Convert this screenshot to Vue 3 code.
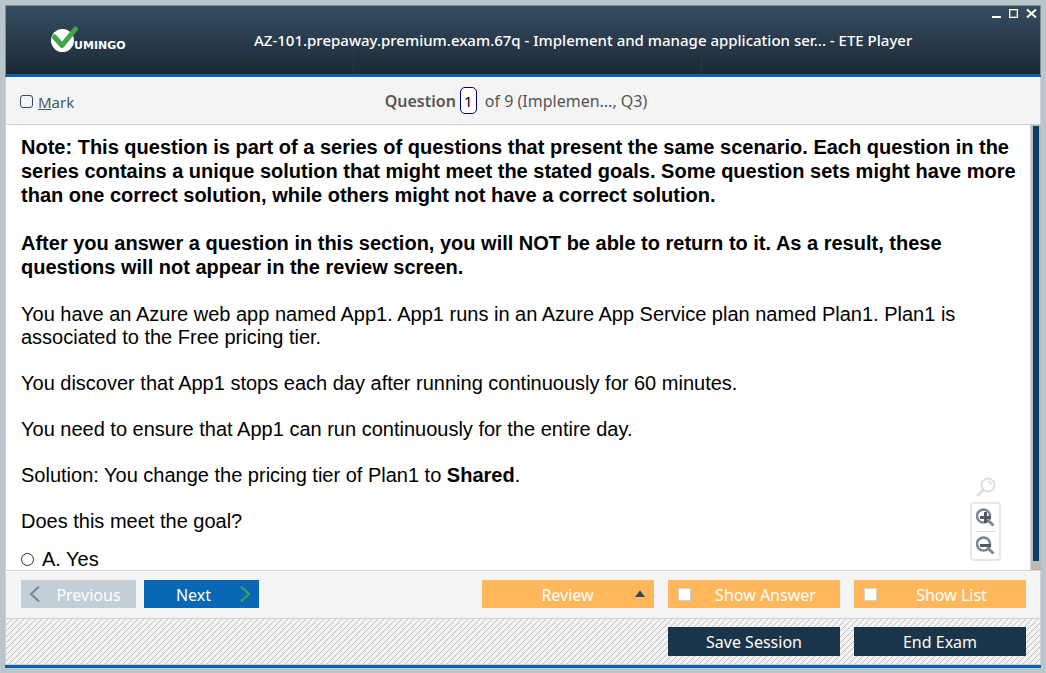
<script setup>
import { ref } from 'vue'

const marked = ref(false)
const questionNumber = ref('1')
const answer = ref('')
const showAnswer = ref(false)
const showList = ref(false)
</script>

<template>
  <div class="desktop">
    <main class="window">
      <header class="titlebar">
        <svg class="logo" viewBox="0 0 84 30" role="img" aria-label="Vumingo">
          <circle cx="12.500" cy="15.500" r="11.500" fill="#fff" />
          <path d="M4.500 12 L12 20.500 L25.500 4" fill="none" stroke="#43a447" stroke-width="5" stroke-linecap="round" stroke-linejoin="round" />
          <text class="logo-text" x="24" y="24">UMINGO</text>
        </svg>
        <h1 class="title">AZ-101.prepaway.premium.exam.67q - Implement and manage application ser... - ETE Player</h1>
        <div class="window-controls">
          <button type="button" aria-label="Minimize">
            <svg width="9" height="11" viewBox="0 0 9 11"><path d="M0 9h9" stroke="#fff" stroke-width="2" /></svg>
          </button>
          <button type="button" aria-label="Maximize">
            <svg width="9" height="11" viewBox="0 0 9 11"><rect x=".5" y="1.500" width="8" height="8" fill="none" stroke="#fff" /><rect x="1.500" y="2.500" width="6" height="6" fill="none" stroke="#8d8580" /></svg>
          </button>
          <button type="button" aria-label="Close">
            <svg width="11" height="11" viewBox="0 0 11 11"><path d="M1 1.500l9 8M10 1.500l-9 8" stroke="#fff" stroke-width="2" /></svg>
          </button>
        </div>
      </header>

      <section class="question-bar">
        <label class="mark"><input v-model="marked" type="checkbox" /><span><u>M</u>ark</span></label>
        <div class="position">
          <label for="question-number">Question</label>
          <input id="question-number" v-model="questionNumber" type="text" />
          <span>of 9 (Implemen..., Q3)</span>
        </div>
      </section>

      <section class="content">
        <article class="question">
          <p class="note">Note: This question is part of a series of questions that present the same scenario. Each question in the<br />series contains a unique solution that might meet the stated goals. Some question sets might have more<br />than one correct solution, while others might not have a correct solution.</p>
          <p class="note">After you answer a question in this section, you will NOT be able to return to it. As a result, these<br />questions will not appear in the review screen.</p>
          <p>You have an Azure web app named App1. App1 runs in an Azure App Service plan named Plan1. Plan1 is<br />associated to the Free pricing tier.</p>
          <p>You discover that App1 stops each day after running continuously for 60 minutes.</p>
          <p>You need to ensure that App1 can run continuously for the entire day.</p>
          <p>Solution: You change the pricing tier of Plan1 to <b>Shared</b>.</p>
          <p>Does this meet the goal?</p>
          <label class="choice"><input v-model="answer" type="radio" name="answer" value="A" /><span>A. Yes</span></label>
        </article>
        <div class="scrollbar"><div class="thumb"></div></div>
        <div class="zoom">
          <svg width="20" height="20" viewBox="0 0 20 20" fill="none" stroke="#dedede" aria-hidden="true">
            <circle cx="12" cy="8" r="6.500" stroke-width="2" />
            <path d="M12 4.500a4 4 0 0 1 3.500 3" stroke-width="1.500" />
            <path d="M7 13L2 18" stroke-width="3" stroke-linecap="round" />
          </svg>
          <div class="zoom-box">
            <button type="button" aria-label="Zoom in">
              <svg width="20" height="20" viewBox="0 0 20 20" fill="none">
                <circle cx="7.500" cy="8" r="6.500" stroke="#788792" stroke-width="2.500" />
                <path d="M12 12.500l5.500 5" stroke="#788792" stroke-width="3" />
                <path d="M4 9.500h11M9.500 4v11" stroke="#54585c" stroke-width="3" />
              </svg>
            </button>
            <button type="button" aria-label="Zoom out">
              <svg width="20" height="20" viewBox="0 0 20 20" fill="none">
                <circle cx="7.500" cy="8" r="6.500" stroke="#788792" stroke-width="2.500" />
                <path d="M12 12.500l5.500 5" stroke="#788792" stroke-width="3" />
                <path d="M4 9.500h11" stroke="#54585c" stroke-width="3" />
              </svg>
            </button>
          </div>
        </div>
      </section>

      <nav class="nav-bar">
        <button type="button" class="btn step previous" disabled>
          <svg width="12" height="18" viewBox="0 0 12 18"><path d="M10 1.500L2 9l8 7.500" fill="none" stroke="#788792" stroke-width="2" /></svg>
          <span>Previous</span>
        </button>
        <button type="button" class="btn step next">
          <span>Next</span>
          <svg width="12" height="18" viewBox="0 0 12 18"><path d="M2 1.500L10 9l-8 7.500" fill="none" stroke="#43a447" stroke-width="2" /></svg>
        </button>
        <div class="tools">
          <button type="button" class="btn option review"><span>Review</span>
            <svg width="10" height="6" viewBox="0 0 10 6"><path d="M0 6L4.500 0h1L10 6z" fill="#34495e" /></svg>
          </button>
          <label class="btn option"><input v-model="showAnswer" type="checkbox" /><span>Show Answer</span></label>
          <label class="btn option"><input v-model="showList" type="checkbox" /><span>Show List</span></label>
        </div>
      </nav>

      <footer class="session-bar">
        <button type="button" class="btn dark">Save Session</button>
        <button type="button" class="btn dark">End Exam</button>
      </footer>
    </main>
  </div>
</template>

<style>
body {
  background: #b9c6cc;
}
</style>

<style scoped>
* {
  box-sizing: border-box;
}

.desktop {
  display: flex;
  min-height: 100vh;
  padding: 5px;
  background: #b9c6cc;
  font-family: "Noto Sans", "Open Sans", sans-serif;
}

.window {
  display: flex;
  flex: 1;
  flex-direction: column;
  min-width: 0;
  border-bottom: 3px solid #0462b0;
  background: #f4f4f4;
}

button {
  margin: 0;
  padding: 0;
  border: 0;
  background: none;
  font: inherit;
}

svg {
  display: block;
  flex: none;
}

.titlebar {
  display: grid;
  grid-template-columns: 1fr auto 1fr;
  align-items: center;
  height: 72px;
  border: 1px solid #7f8e93;
  border-bottom: 3px solid #0462b0;
  background:
    repeating-linear-gradient(#2c3b78 0 1px, transparent 1px 2px) 348px 0 / 1px 100% no-repeat,
    repeating-linear-gradient(#2c3b78 0 1px, transparent 1px 2px) 696px 0 / 1px 100% no-repeat,
    linear-gradient(#364e62, #1a2734);
  background-origin: border-box;
}

.logo {
  width: 84px;
  height: 30px;
  margin-left: 44px;
}

.logo-text {
  fill: #fff;
  font: bold 11px "DejaVu Sans", sans-serif;
}

.title {
  margin: 0;
  padding-left: 120px;
  color: #fff;
  font-size: 15px;
  font-weight: 500;
  line-height: 22px;
  white-space: nowrap;
}

.window-controls {
  display: flex;
  align-self: start;
  justify-content: flex-end;
  gap: 8px;
  padding: 2px 3px 0 0;
}

.question-bar {
  display: grid;
  grid-template-columns: 1fr auto 1fr;
  align-items: center;
  height: 48px;
  padding: 0 28px 0 14px;
  border: 1px solid #d0d0d0;
  border-top: 0;
  color: #555;
  font-size: 16px;
}

.mark {
  display: flex;
  align-items: center;
  gap: 5px;
  padding-top: 2px;
  color: #46596a;
  font-size: 15px;
}

.mark input {
  width: 13px;
  height: 13px;
  margin: 0;
  border: 1px solid #34495e;
  border-radius: 3px;
  appearance: none;
}

.position {
  display: flex;
  align-items: center;
  gap: 4px;
}

.position label {
  font-weight: 600;
}

.position input {
  width: 17px;
  height: 27px;
  margin-right: 4px;
  padding: 0;
  border: 1px solid #000080;
  border-radius: 5px;
  background: #fff;
  color: #000;
  font: 15px "Noto Sans", sans-serif;
  text-align: center;
}

.content {
  position: relative;
  display: flex;
  flex: 1;
  border-bottom: 1px solid #d0d0d0;
  border-left: 1px solid #d0d0d0;
  background: #fff;
}

.question {
  flex: 1;
  min-width: 0;
  padding: 10px 15px 0;
  border-right: 1px solid #d8d8d8;
  color: #000;
  font-family: "Liberation Sans", Arial, sans-serif;
  font-size: 20px;
  line-height: 23px;
  white-space: nowrap;
}

.question p {
  margin: 0 0 23px;
}

.question .note {
  margin-bottom: 24px;
  font-weight: 700;
  line-height: 24px;
}

.choice {
  display: flex;
  align-items: center;
  gap: 8px;
  margin-top: -7px;
  line-height: 21px;
}

.choice input {
  width: 13px;
  height: 13px;
  margin: 0;
  border: 1px solid #333;
  border-radius: 50%;
  appearance: none;
}

.scrollbar {
  display: flex;
  width: 10px;
  padding: 1px 2px 9px;
  background: #bab9b5;
}

.thumb {
  flex: 1;
  background: #0a416c;
}

.zoom {
  position: absolute;
  right: 40px;
  bottom: 9px;
  display: flex;
  flex-direction: column;
  align-items: center;
  gap: 5px;
}

.zoom-box {
  width: 31px;
  padding: 0 4px;
  border: 2px solid #e7e7e7;
  border-radius: 4px;
  background: #fff;
}

.zoom-box button {
  display: block;
  padding: 4px 0 3px;
}

.zoom-box button + button {
  border-top: 1px solid #ddd;
}

.nav-bar {
  display: flex;
  gap: 8px;
  height: 48px;
  padding: 8px 14px 0 15px;
  border: 1px solid #d0d0d0;
  border-top: 1px solid #fff;
}

.btn {
  display: flex;
  align-items: center;
  height: 28px;
  color: #fff;
  font-size: 16px;
  line-height: 28px;
}

.btn span {
  flex: 1;
  padding-top: 2px;
  text-align: center;
}

.step {
  width: 115px;
  padding: 0 8px;
}

.previous {
  gap: 8px;
  background: #c4ced6;
}

.next {
  padding-left: 4px;
  background: #0868b6;
}

.tools {
  display: flex;
  gap: 14px;
  margin-left: auto;
}

.option {
  width: 172px;
  padding: 0 0 0 10px;
  background: #ffb75c;
}

.review {
  padding-right: 9px;
  padding-left: 18px;
}

.option input {
  width: 13px;
  height: 13px;
  margin: 0;
  border: 1px solid #d0d0d0;
  background: #fff;
  appearance: none;
}

.session-bar {
  display: flex;
  justify-content: flex-end;
  gap: 14px;
  height: 46px;
  padding: 8px 14px 0;
  border: 1px solid #d0d0d0;
  border-top: 0;
  background: linear-gradient(135deg, transparent 44%, #bdbdbd 44% 56%, transparent 56%) 0 0 / 6px 6px #f4f4f4;
}

.dark {
  justify-content: center;
  width: 172px;
  height: 29px;
  background: #1a344a;
}
</style>
